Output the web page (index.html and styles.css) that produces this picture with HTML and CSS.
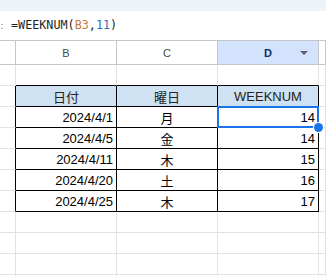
FILE: index.html
```html
<!DOCTYPE html>
<html lang="ja">
<head>
<meta charset="utf-8">
<title>WEEKNUM</title>
<link rel="stylesheet" href="styles.css">
</head>
<body>
<div class="app">
  <div class="toolbar"></div>
  <div class="formula-bar">
    <span class="fx-tail"></span>
    <span class="formula">=WEEKNUM(<span class="ref">B3</span>,<span class="num">11</span>)</span>
  </div>
  <div class="sheet">
    <!-- column headers -->
    <div class="ch"></div>
    <div class="ch">B</div>
    <div class="ch">C</div>
    <div class="ch ch-sel">D<span class="caret"></span></div>
    <div class="ch"></div>

    <!-- row 1 -->
    <div class="c"></div><div class="c above"></div><div class="c above"></div><div class="c above"></div><div class="c"></div>

    <!-- row 2: table header -->
    <div class="c left"></div>
    <div class="c t th">日付</div>
    <div class="c t th">曜日</div>
    <div class="c t th">WEEKNUM</div>
    <div class="c"></div>

    <div class="c left"></div>
    <div class="c t r">2024/4/1</div>
    <div class="c t m">月</div>
    <div class="c t r sel">14<span class="handle"></span></div>
    <div class="c"></div>

    <div class="c left"></div>
    <div class="c t r">2024/4/5</div>
    <div class="c t m">金</div>
    <div class="c t r">14</div>
    <div class="c"></div>

    <div class="c left"></div>
    <div class="c t r">2024/4/11</div>
    <div class="c t m">木</div>
    <div class="c t r">15</div>
    <div class="c"></div>

    <div class="c left"></div>
    <div class="c t r">2024/4/20</div>
    <div class="c t m">土</div>
    <div class="c t r">16</div>
    <div class="c"></div>

    <div class="c left"></div>
    <div class="c t r">2024/4/25</div>
    <div class="c t m">木</div>
    <div class="c t r">17</div>
    <div class="c"></div>

    <!-- empty rows -->
    <div class="c"></div><div class="c"></div><div class="c"></div><div class="c"></div><div class="c"></div>
    <div class="c"></div><div class="c"></div><div class="c"></div><div class="c"></div><div class="c"></div>
    <div class="c"></div><div class="c"></div><div class="c"></div><div class="c"></div><div class="c"></div>
    <div class="c"></div><div class="c"></div><div class="c"></div><div class="c"></div><div class="c"></div>
  </div>
</div>
</body>
</html>
```

FILE: styles.css
```css
html, body {
  margin: 0;
  padding: 0;
  background: #fff;
  overflow: hidden;
}

.app {
  width: 326px;
  height: 276px;
  overflow: hidden;
  font-family: "Liberation Sans", Arial, "Noto Sans CJK JP", sans-serif;
}

.toolbar {
  height: 11px;
  background: #eef2f9;
}

.formula-bar {
  height: 29px;
  display: flex;
  align-items: center;
  padding-bottom: 2px;
  box-sizing: border-box;
}

/* the right end of the fx icon, scrolled mostly out of view */
.fx-tail {
  flex: none;
  width: 2px;
  height: 5px;
  margin-left: 1px;
  margin-right: 8px;
  margin-top: 3px;
  background:
    linear-gradient(#b0b4b8, #b0b4b8) 0 0 / 2px 1px no-repeat,
    linear-gradient(#b0b4b8, #b0b4b8) 0 4px / 2px 1px no-repeat;
}

.formula {
  font-family: "DejaVu Sans Mono", monospace;
  font-size: 11.75px;
  color: #1f1f1f;
}

.formula .ref { color: #c97a38; }
.formula .num { color: #2a6fb7; }

.sheet {
  display: grid;
  grid-template-columns: 16px 101px 101px 101px 1fr;
  grid-template-rows: 25px;
  grid-auto-rows: 21px;
}

.ch {
  box-sizing: border-box;
  border-top: 1px solid #c4c7c5;
  border-bottom: 1px solid #c4c7c5;
  border-right: 1px solid #c4c7c5;
  display: flex;
  align-items: center;
  justify-content: center;
  font-size: 11px;
  color: #444746;
  position: relative;
}

.ch-sel {
  background: #d3e3fd;
  color: #0b2f6b;
  font-weight: bold;
}

.caret {
  position: absolute;
  right: 10px;
  top: 10px;
  width: 0;
  height: 0;
  border-left: 4px solid transparent;
  border-right: 4px solid transparent;
  border-top: 4px solid #5f6368;
}

.c {
  box-sizing: border-box;
  border-right: 1px solid #e1e1e1;
  border-bottom: 1px solid #e1e1e1;
  display: flex;
  align-items: center;
  font-size: 13px;
  color: #000;
  white-space: nowrap;
  position: relative;
}

.above { border-bottom-color: #000; }
.left { border-right-color: #000; }

.t {
  border-right-color: #000;
  border-bottom-color: #000;
}

.th {
  background: #cfe2f3;
  justify-content: center;
  color: #222;
}

.r {
  justify-content: flex-end;
  padding-right: 3px;
}

.m {
  justify-content: center;
}

.sel::after {
  content: "";
  position: absolute;
  left: -1px;
  top: -1px;
  right: -1px;
  bottom: -1px;
  border: 2px solid #1a73e8;
  box-sizing: border-box;
  pointer-events: none;
}

.handle {
  position: absolute;
  right: -5px;
  bottom: -5px;
  width: 9px;
  height: 9px;
  border-radius: 50%;
  background: #1a73e8;
  box-shadow: 0 0 0 1px #fff;
  z-index: 2;
}
```
